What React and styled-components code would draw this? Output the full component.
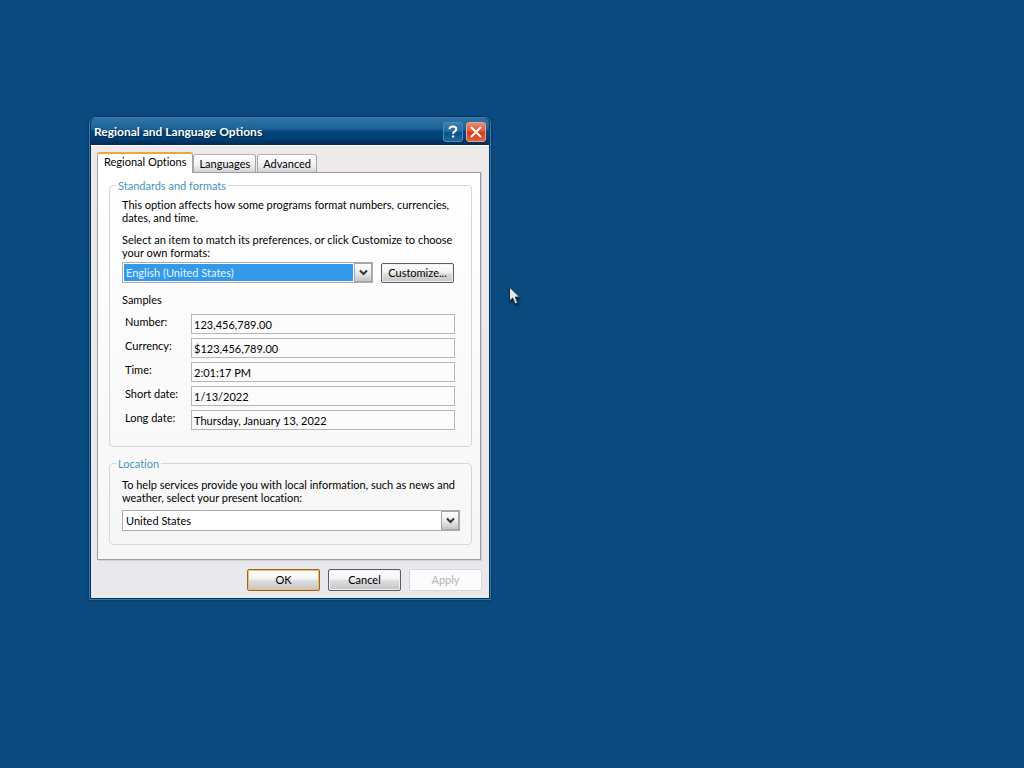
import React from 'react';
import styled, { createGlobalStyle } from 'styled-components';

const GlobalStyle = createGlobalStyle`
  * {
    box-sizing: border-box;
  }

  body {
    margin: 0;
    background: #0b4a7f;
    color: #000;
    font: 11px/13px "Lato", "Liberation Sans", sans-serif;
    font-variant-ligatures: none;
  }

  button,
  input,
  select {
    margin: 0;
    font: inherit;
    color: inherit;
  }
`;

const Desktop = styled.main`
  position: relative;
  min-height: 100vh;
  padding: 117px 89px 24px;
  overflow: hidden;
`;

const Dialog = styled.section`
  max-width: 402px;
  padding: 0 1px 1px;
  border: 1px solid #3a78a8;
  border-radius: 6px 6px 0 0;
  background: #04345f;
  box-shadow: 0 0 3px rgba(0, 20, 50, 0.6);
`;

const TitleBar = styled.header`
  display: flex;
  align-items: center;
  gap: 3px;
  height: 27px;
  padding: 1px 3px 0;
  border-radius: 5px 5px 0 0;
  background: linear-gradient(#2f74a8 0%, #1e6298 40%, #04467c 50%, #024074 75%, #02294f 100%);
`;

const Title = styled.h1`
  flex: 1;
  margin: 0;
  color: #fff;
  font: bold 12px/14px "Lato", "Open Sans", sans-serif;
  text-shadow: 1px 1px 1px #02294f;
`;

const CaptionButton = styled.button`
  display: grid;
  place-items: center;
  width: 20px;
  height: 20px;
  padding: 0;
  border: 1px solid ${props => (props.$close ? '#f0a08c' : '#4b8ab8')};
  border-radius: 3px;
  background: ${props =>
    props.$close
      ? 'linear-gradient(#e58a72, #d9543a 50%, #c93a20 51%, #dc6444)'
      : 'linear-gradient(#3a7fb2, #1e689c 50%, #0a4e84 51%, #1d6a9c)'};
`;

const Body = styled.div`
  padding: 6px 8px 7px 6px;
  border-top: 1px solid #fff;
  background: linear-gradient(#eee9e9, #e8e8ed);
`;

const TabList = styled.div`
  display: flex;
  align-items: flex-end;
`;

const Tab = styled.button`
  position: relative;
  height: ${props => (props.$active ? 21 : 18)}px;
  margin: ${props => (props.$active ? '0 0 -1px' : '0 1px 0 0')};
  padding: ${props => (props.$active ? '0 6px 4px' : '0 5px 1px')};
  border: 1px solid #a3a3a8;
  border-top: ${props => (props.$active ? '2px solid #f0a63c' : '1px solid #b4b4b8')};
  border-bottom: 0;
  border-radius: 3px 3px 0 0;
  background: ${props => (props.$active ? '#fff' : 'linear-gradient(#fff, #f0f0f1 60%, #d2d2d4)')};
`;

const Panel = styled.div`
  padding: 6px 8px 14px 11px;
  border: 1px solid #9c9ca1;
  background: linear-gradient(#fff, #f6f6f6);
  box-shadow: 1px 1px 0 #d0d0d4;
`;

const Group = styled.fieldset`
  min-width: 0;
  margin: 0 0 ${props => (props.$last ? 0 : 10)}px;
  padding: 0 6px;
  border: 1px solid #d3d6d8;
  border-radius: 4px;
`;

const Legend = styled.legend`
  padding: 0 2px;
  color: #3f97bd;
`;

const GroupBody = styled.div`
  padding: ${props => (props.$last ? 8 : 6)}px 5px 13px 6px;
`;

const Text = styled.p`
  margin: 0 0 9px;
`;

const FieldLabel = styled.label`
  display: block;
  margin-bottom: ${props => props.$gap}px;
`;

const FormatRow = styled.div`
  display: flex;
  align-items: center;
  gap: 8px;
  padding-right: 6px;
`;

const ComboFrame = styled.div`
  display: grid;
  grid-template-columns: 1fr 18px;
  flex: 1;
  height: 21px;
  border: 1px solid #a9adb0;
  background: #fff;
`;

const Select = styled.select`
  grid-area: 1 / 1 / 2 / 3;
  width: 100%;
  padding: 1px 19px 1px 1px;
  border: 0;
  outline: 0;
  appearance: none;
  background: ${props => (props.$selected ? '#3399ea' : '#fff')} content-box;
  background-clip: content-box;
  color: ${props => (props.$selected ? '#e6f6ff' : '#000')};
  text-indent: 2px;
`;

const ComboArrow = styled.span`
  grid-area: 1 / 2;
  display: grid;
  place-items: center;
  border: 1px solid #a6a6a8;
  background: linear-gradient(#fff, #ececec 50%, #c4c4c4);
  pointer-events: none;
`;

const Button = styled.button`
  height: ${props => (props.$small ? 20 : 22)}px;
  width: 73px;
  padding: 0 0 ${props => (props.$small ? 0 : 2)}px;
  border: 1px solid ${props => (props.$primary ? '#8d6a2c' : '#5c5c60')};
  border-radius: 2px;
  background: linear-gradient(#fff, #f3f3f3 45%, #dcdcdc 55%, #c6c6c8);
  box-shadow: inset 0 0 0 1px ${props => (props.$primary ? '#f3bd62' : '#f1f1f1')};

  &:disabled {
    border-color: #d8d8da;
    background: #fcfcfc;
    box-shadow: none;
    color: #b4b4b8;
  }
`;

const SamplesTitle = styled.h2`
  margin: 10px 0 8px;
  font: inherit;
`;

const Samples = styled.div`
  display: grid;
  grid-template-columns: 66px 1fr;
  row-gap: 4px;
  padding: 0 5px 3px 3px;
`;

const SampleInput = styled.input`
  width: 100%;
  height: 20px;
  padding: 0 2px;
  border: 1px solid #b4b6b8;
  outline: 0;
  background: #fbfbfb;
`;

const SampleLabel = styled.label`
  padding-top: 1px;
`;

const Actions = styled.footer`
  display: flex;
  justify-content: flex-end;
  gap: 8px;
  margin: 9px -1px 0 0;
`;

const Pointer = styled.svg`
  position: absolute;
  left: 508px;
  top: 286px;
  filter: drop-shadow(1px 2px 1px rgba(0, 0, 0, 0.5));
`;

const SAMPLES = [
  { id: 'number', label: 'Number:', value: '123,456,789.00' },
  { id: 'currency', label: 'Currency:', value: '$123,456,789.00' },
  { id: 'time', label: 'Time:', value: '2:01:17 PM' },
  { id: 'short-date', label: 'Short date:', value: '1/13/2022' },
  { id: 'long-date', label: 'Long date:', value: 'Thursday, January 13, 2022' },
];

const TABS = ['Regional Options', 'Languages', 'Advanced'];

function Combo({ id, value, selected }) {
  return (
    <ComboFrame>
      <Select id={id} defaultValue={value} $selected={selected}>
        <option>{value}</option>
      </Select>
      <ComboArrow>
        <svg width="9" height="7" viewBox="0 0 9 7" aria-hidden="true">
          <path d="M1 1.5l3.5 3.5L8 1.5" fill="none" stroke="#333" strokeWidth="2" />
        </svg>
      </ComboArrow>
    </ComboFrame>
  );
}

function App() {
  return (
    <>
      <GlobalStyle />
      <Desktop>
        <Dialog role="dialog" aria-labelledby="dialog-title">
          <TitleBar>
            <Title id="dialog-title">Regional and Language Options</Title>
            <CaptionButton aria-label="Help">
              <svg width="12" height="14" viewBox="0 0 12 14" aria-hidden="true">
                <path
                  d="M2.5 4.2C2.6 2.3 4 1.5 5.8 1.5c2 0 3.5 1 3.5 2.7C9.3 6.5 6 6.4 6 9"
                  fill="none"
                  stroke="#fff"
                  strokeWidth="2"
                />
                <path d="M5 10.5h2.2v2H5z" fill="#fff" />
              </svg>
            </CaptionButton>
            <CaptionButton $close aria-label="Close">
              <svg width="14" height="14" viewBox="0 0 14 14" aria-hidden="true">
                <path d="M2 2l10 10M12 2L2 12" stroke="#fff4e8" strokeWidth="2" />
              </svg>
            </CaptionButton>
          </TitleBar>
          <Body>
            <TabList role="tablist">
              {TABS.map((tab, index) => (
                <Tab key={tab} role="tab" aria-selected={index === 0} $active={index === 0}>
                  {tab}
                </Tab>
              ))}
            </TabList>
            <Panel role="tabpanel">
              <Group>
                <Legend>Standards and formats</Legend>
                <GroupBody>
                  <Text>
                    This option affects how some programs format numbers, currencies,
                    <br />
                    dates, and time.
                  </Text>
                  <FieldLabel htmlFor="format" $gap={3}>
                    Select an item to match its preferences, or click Customize to choose
                    <br />
                    your own formats:
                  </FieldLabel>
                  <FormatRow>
                    <Combo id="format" value="English (United States)" selected />
                    <Button $small>Customize...</Button>
                  </FormatRow>
                  <SamplesTitle>Samples</SamplesTitle>
                  <Samples>
                    {SAMPLES.map(sample => (
                      <React.Fragment key={sample.id}>
                        <SampleLabel htmlFor={sample.id}>{sample.label}</SampleLabel>
                        <SampleInput id={sample.id} value={sample.value} readOnly />
                      </React.Fragment>
                    ))}
                  </Samples>
                </GroupBody>
              </Group>
              <Group $last>
                <Legend>Location</Legend>
                <GroupBody $last>
                  <FieldLabel htmlFor="location" $gap={6}>
                    To help services provide you with local information, such as news and
                    <br />
                    weather, select your present location:
                  </FieldLabel>
                  <Combo id="location" value="United States" />
                </GroupBody>
              </Group>
            </Panel>
            <Actions>
              <Button $primary>OK</Button>
              <Button>Cancel</Button>
              <Button disabled>Apply</Button>
            </Actions>
          </Body>
        </Dialog>
        <Pointer width="14" height="20" viewBox="0 0 14 20" aria-hidden="true">
          <path
            d="M1.5 1v14l3.2-3 2.4 5.8 2.6-1.1-2.4-5.6h4.4z"
            fill="#e4e6ea"
            stroke="#1b2c3c"
            strokeWidth="1"
          />
        </Pointer>
      </Desktop>
    </>
  );
}

export default App;
